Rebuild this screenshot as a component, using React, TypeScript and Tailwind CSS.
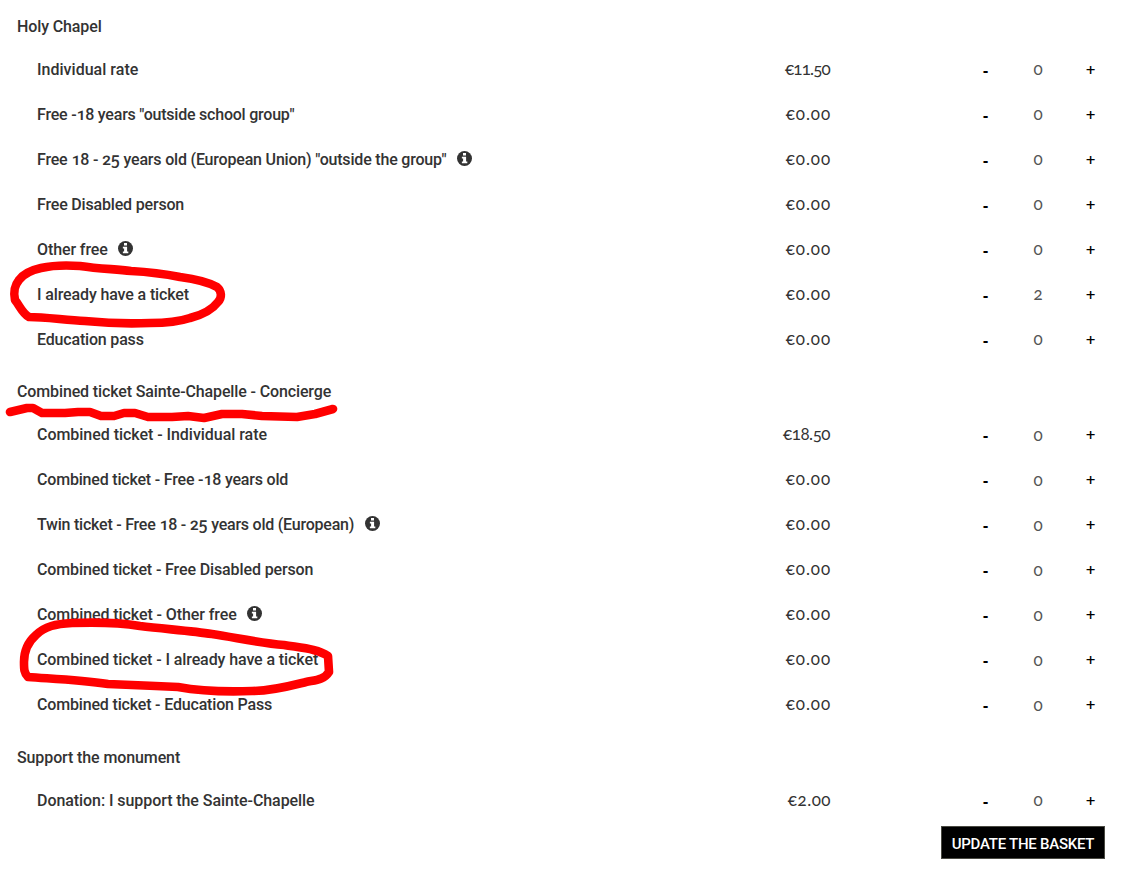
import React from 'react'

type Ticket = { name: string, price: string, qty: number, info?: boolean, tracking: string, spacing?: string }

const chapel: Ticket[] = [
    { name: 'Individual rate', price: '€11.50', qty: 0, tracking: 'tracking-[0.02px]', spacing: 'tracking-[-0.8px] mr-[1px]' },
    { name: 'Free -18 years "outside school group"', price: '€0.00', qty: 0, tracking: 'tracking-[-0.22px]' },
    { name: 'Free 18 - 25 years old (European Union) "outside the group"', price: '€0.00', qty: 0, info: true, tracking: 'tracking-[-0.19px]' },
    { name: 'Free Disabled person', price: '€0.00', qty: 0, tracking: 'tracking-[-0.18px]' },
    { name: 'Other free', price: '€0.00', qty: 0, info: true, tracking: 'tracking-[-0.1px]' },
    { name: 'I already have a ticket', price: '€0.00', qty: 2, tracking: 'tracking-[-0.13px]' },
    { name: 'Education pass', price: '€0.00', qty: 0, tracking: 'tracking-[-0.18px]' },
]

const combined: Ticket[] = [
    { name: 'Combined ticket - Individual rate', price: '€18.50', qty: 0, tracking: 'tracking-[-0.04px]', spacing: 'tracking-[-0.5px] mr-[1px]' },
    { name: 'Combined ticket - Free -18 years old', price: '€0.00', qty: 0, tracking: 'tracking-[-0.19px]' },
    { name: 'Twin ticket - Free 18 - 25 years old (European)', price: '€0.00', qty: 0, info: true, tracking: 'tracking-[-0.23px]' },
    { name: 'Combined ticket - Free Disabled person', price: '€0.00', qty: 0, tracking: 'tracking-[-0.12px]' },
    { name: 'Combined ticket - Other free', price: '€0.00', qty: 0, info: true, tracking: 'tracking-[-0.08px]' },
    { name: 'Combined ticket - I already have a ticket', price: '€0.00', qty: 0, tracking: 'tracking-[-0.1px]' },
    { name: 'Combined ticket - Education Pass', price: '€0.00', qty: 0, tracking: 'tracking-[-0.17px]' },
]

const support: Ticket[] = [
    { name: 'Donation: I support the Sainte-Chapelle', price: '€2.00', qty: 0, tracking: 'tracking-[-0.07px]', spacing: 'tracking-[0.5px]' },
]

const InfoIcon = () => (
    <svg viewBox="0 0 16 16" className="w-[15px] h-[15px] ml-[10.5px] -mt-[3px] shrink-0">
        <circle cx="8" cy="8" r="8" fill="#333" />
        <path d="M6.4 2.2h3.2v2.5H6.4zM5.2 6.2h4.5v4.9h1.3v1.9H5.2v-1.9h1.3V8H5.2z" fill="#fff" />
    </svg>
)

const Row = ({ ticket, qtyClass }: { ticket: Ticket, qtyClass?: string }) => (
    <div className="flex items-center h-[45px] pl-[37px]">
        <div className="flex items-center w-[694px] pt-px text-[16px] font-medium oldstyle-nums text-[#333]">
            <span className={`whitespace-nowrap ${ticket.tracking}`}>{ticket.name}</span>
            {ticket.info && <InfoIcon />}
        </div>
        <div className="flex justify-end w-[100px] pb-[2px] font-['Lato'] text-[17px] oldstyle-nums text-[#333]">
            <span className={ticket.spacing || 'tracking-[0.9px]'}>{ticket.price}</span>
        </div>
        <div className="flex items-center ml-[128px] text-center font-['Noto_Sans'] text-[16px]">
            <button className="w-[53px] font-bold text-black">-</button>
            <span className={`w-[52px] font-['Lato'] text-[17px] oldstyle-nums text-[#555] ${qtyClass || ''}`}>{ticket.qty}</span>
            <button className="w-[53px] font-medium text-[17px] text-black">+</button>
        </div>
    </div>
)

const Section = ({ title, tickets, tracking, qtyClass }: { title: string, tickets: Ticket[], tracking: string, qtyClass?: string }) => (
    <div>
        <h2 className={`h-[42px] pl-[17px] text-[16px] leading-[44px] font-medium text-[#333] ${tracking}`}>{title}</h2>
        {tickets.map((ticket) => <Row key={ticket.name} ticket={ticket} qtyClass={qtyClass} />)}
    </div>
)

const App = () => {
    return (
        <div className="relative w-[1131px] h-[875px] pt-[5px] bg-white overflow-hidden font-['Roboto',sans-serif]">
            <div className="flex flex-col gap-[8px]">
                <Section title="Holy Chapel" tickets={chapel} tracking="tracking-[-0.12px]" qtyClass="-mt-[2px]" />
                <Section title="Combined ticket Sainte-Chapelle - Concierge" tickets={combined} tracking="tracking-[-0.13px]" />
                <div className="pt-px">
                    <Section title="Support the monument" tickets={support} tracking="tracking-[-0.11px]" qtyClass="-mt-[2px]" />
                </div>
            </div>
            <div className="flex justify-end pr-[26px] mt-[3px]">
                <button className="w-[164px] h-[33px] pt-[3px] bg-black border border-[#4a4a42] text-[15px] tracking-[-0.25px] font-medium text-white whitespace-nowrap">UPDATE THE BASKET</button>
            </div>

            {/* red marker strokes */}
            <svg className="absolute inset-0 w-full h-full pointer-events-none" viewBox="0 0 1131 875" fill="none" stroke="#f00" strokeWidth="8.6" strokeLinecap="round" strokeLinejoin="round">
                <path d="M29 317C22 313 20 306 15 300C13 290 15 285 19 280C24 273 32 270 41 268C54 265 67 265 80 266C100 269 115 269 131 271C150 272 165 274 180 277C195 279 208 282 217 287C222 291 222 298 218 302C212 310 202 315 190 318C178 322 165 323 150 323C128 324 105 323 85 321C65 320 45 317 29 317Z" />
                <path d="M10 412L27 408L33 408L42 413L65 413L78 412L90 412L101 416L114 416L124 413L135 413L148 417L172 417L188 416L204 418L222 414L242 414L262 416L297 417L315 414L333 409" />
                <path d="M28 677C24 673 24 669 24 662C24 650 28 642 36 635C45 626 56 624 72 623C100 622 122 623 140 626C165 629 192 631 212 634C238 638 260 643 284 645C302 648 318 649 328 656L329 672C324 680 315 680 306 682C290 686 272 691 252 691C225 692 200 691 178 687C155 686 130 685 108 684C80 680 55 679 28 677Z" />
            </svg>
        </div>
    )
}

export default App
